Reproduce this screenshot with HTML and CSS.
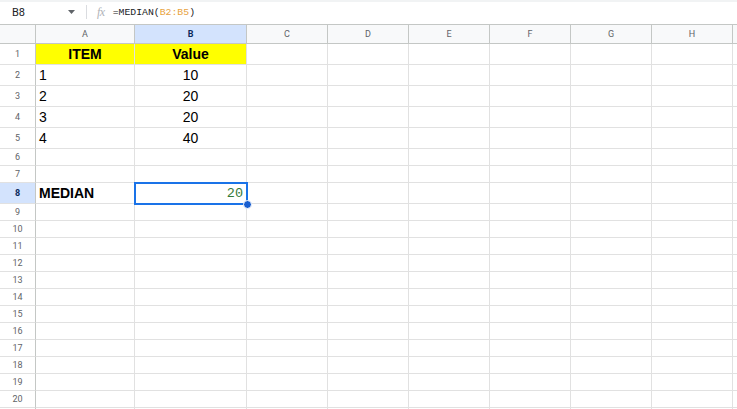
FILE: index.html
```html
<!DOCTYPE html>
<html lang="en">
<head>
  <meta charset="UTF-8" />
  <title>MEDIAN</title>
  <link rel="stylesheet" href="styles.css">
</head>
<body>

  <div class="formula-bar">
    <div class="name-box">
      <span>B8</span>
      <svg class="caret" width="7" height="4" viewBox="0 0 7 4"><path d="M0 0h7L3.5 4z" fill="#5f6368"/></svg>
    </div>
    <div class="sep"></div>
    <span class="fx">fx</span>
    <div class="formula">=MEDIAN(<span class="range">B2:B5</span>)</div>
  </div>

  <div class="sheet">
    <div class="corner"></div>
    <div class="col-head">A</div>
    <div class="col-head active">B</div>
    <div class="col-head">C</div>
    <div class="col-head">D</div>
    <div class="col-head">E</div>
    <div class="col-head">F</div>
    <div class="col-head">G</div>
    <div class="col-head">H</div>
    <div class="col-head"></div>

    <div class="row-head">1</div>
    <div class="cell yellow bold center">ITEM</div>
    <div class="cell yellow bold center">Value</div>
    <div class="cell"></div><div class="cell"></div><div class="cell"></div><div class="cell"></div><div class="cell"></div><div class="cell"></div><div class="cell"></div>

    <div class="row-head">2</div>
    <div class="cell">1</div>
    <div class="cell center">10</div>
    <div class="cell"></div><div class="cell"></div><div class="cell"></div><div class="cell"></div><div class="cell"></div><div class="cell"></div><div class="cell"></div>

    <div class="row-head">3</div>
    <div class="cell">2</div>
    <div class="cell center">20</div>
    <div class="cell"></div><div class="cell"></div><div class="cell"></div><div class="cell"></div><div class="cell"></div><div class="cell"></div><div class="cell"></div>

    <div class="row-head">4</div>
    <div class="cell">3</div>
    <div class="cell center">20</div>
    <div class="cell"></div><div class="cell"></div><div class="cell"></div><div class="cell"></div><div class="cell"></div><div class="cell"></div><div class="cell"></div>

    <div class="row-head">5</div>
    <div class="cell">4</div>
    <div class="cell center">40</div>
    <div class="cell"></div><div class="cell"></div><div class="cell"></div><div class="cell"></div><div class="cell"></div><div class="cell"></div><div class="cell"></div>

    <div class="row-head">6</div>
    <div class="cell"></div><div class="cell"></div><div class="cell"></div><div class="cell"></div><div class="cell"></div><div class="cell"></div><div class="cell"></div><div class="cell"></div><div class="cell"></div>

    <div class="row-head">7</div>
    <div class="cell"></div><div class="cell"></div><div class="cell"></div><div class="cell"></div><div class="cell"></div><div class="cell"></div><div class="cell"></div><div class="cell"></div><div class="cell"></div>

    <div class="row-head active">8</div>
    <div class="cell bold">MEDIAN</div>
    <div class="cell selected">20</div>
    <div class="cell"></div><div class="cell"></div><div class="cell"></div><div class="cell"></div><div class="cell"></div><div class="cell"></div><div class="cell"></div>
  </div>

  <script>
    // empty rows 9-20, plus the edge of 21
    const sheet = document.querySelector('.sheet');
    for (let r = 9; r <= 21; r++) {
      let html = '<div class="row-head">' + (r < 21 ? r : '') + '</div>';
      for (let c = 0; c < 9; c++) html += '<div class="cell"></div>';
      sheet.insertAdjacentHTML('beforeend', html);
    }
  </script>

</body>
</html>
```

FILE: styles.css
```css
body {
  margin: 0;
  font-family: Arial, "Liberation Sans", sans-serif;
  background: #fff;
  overflow: hidden;
}
.formula-bar {
  height: 25px;
  box-sizing: border-box;
  border-bottom: 1px solid #c4c7c5;
  box-shadow: inset 0 2px 0 #f1f3f4;
  display: flex;
  align-items: center;
}
.name-box {
  width: 63px;
  padding-left: 12px;
  display: flex;
  align-items: center;
  justify-content: space-between;
  font-family: Roboto, sans-serif;
  font-size: 11px;
  color: #202124;
}
.sep {
  width: 1px;
  height: 14px;
  background: #dadce0;
  margin-left: 11px;
}
.fx {
  font-family: "Liberation Serif", serif;
  font-style: italic;
  font-size: 12px;
  color: #b0b3b8;
  margin-left: 10px;
  letter-spacing: -0.5px;
}
.formula {
  margin-left: 8px;
  font-family: "Liberation Mono", monospace;
  font-size: 9.8px;
  color: #202124;
}
.range {
  color: #e8a23c;
}
.sheet {
  display: grid;
  grid-template-columns: 36px 99px 112px repeat(6, 81px) 1fr;
  grid-template-rows: 19px repeat(5, 21px) 17px 17px 21px repeat(13, 17px);
}
.sheet > div {
  box-sizing: border-box;
  border-right: 1px solid #e1e1e1;
  border-bottom: 1px solid #e1e1e1;
}
.corner {
  background: #f8f9fa;
  border-right-color: #c4c7c5 !important;
  border-bottom-color: #c4c7c5 !important;
}
.col-head {
  background: #f8f9fa;
  border-right-color: #c4c7c5 !important;
  border-bottom-color: #c4c7c5 !important;
  font-family: Roboto, sans-serif;
  font-size: 9px;
  color: #5f6368;
  display: flex;
  align-items: center;
  justify-content: center;
}
.row-head {
  background: #fff;
  border-right-color: #c4c7c5 !important;
  font-family: Roboto, sans-serif;
  font-size: 9px;
  color: #5f6368;
  display: flex;
  align-items: center;
  justify-content: center;
}
.col-head.active, .row-head.active {
  background: #d3e3fd;
  color: #0b2a5c;
  font-weight: bold;
}
.cell {
  font-size: 14px;
  color: #000;
  padding: 0 3px;
  display: flex;
  align-items: center;
  white-space: nowrap;
}
.center {
  justify-content: center;
}
.bold {
  font-weight: bold;
}
.yellow {
  background: #ffff00;
}
.sheet > .selected {
  position: relative;
  justify-content: flex-end;
  padding-right: 4px;
  font-family: "Liberation Mono", monospace;
  font-size: 13.5px;
  color: #357a38;
  border: none;
  box-shadow: inset 0 0 0 1px #1a73e8, 0 0 0 1px #1a73e8;
  z-index: 1;
}
.selected::after {
  content: "";
  position: absolute;
  right: -5px;
  bottom: -5px;
  width: 9px;
  height: 9px;
  border-radius: 50%;
  background: #1a5fd0;
  border: 1px solid #fff;
  box-sizing: border-box;
}
```
